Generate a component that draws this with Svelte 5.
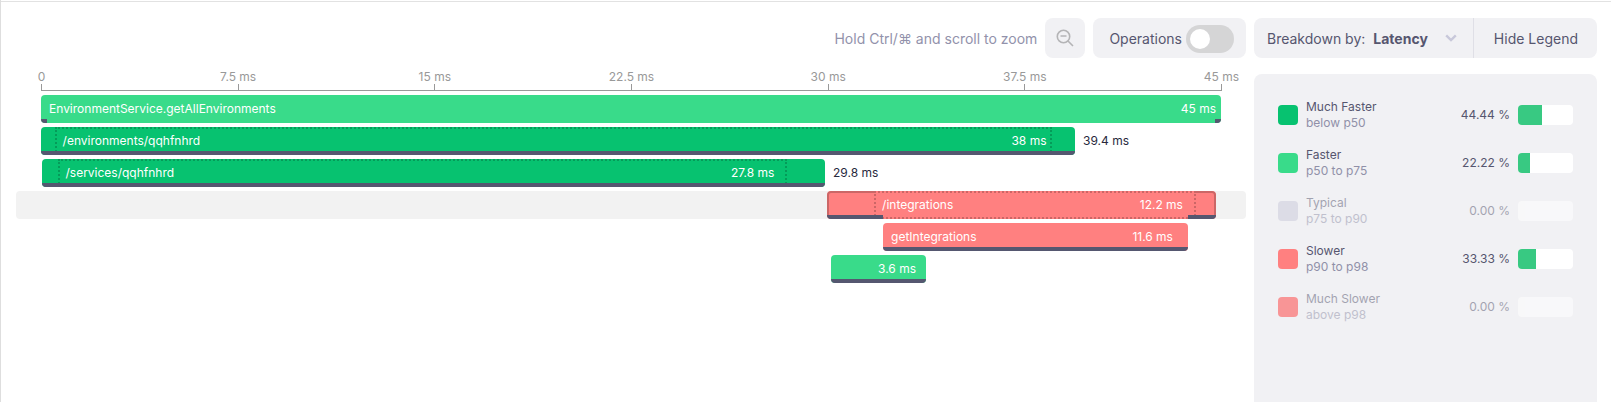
<script>
  const ticks = ['0', '7.5 ms', '15 ms', '22.5 ms', '30 ms', '37.5 ms', '45 ms'];

  // Positions are shares of the whole trace, in percent.
  const spans = [
    { tone: 'faster', start: 0, end: 100, name: 'EnvironmentService.getAllEnvironments', time: '45 ms', pad: 5, self: [[0, 0.5], [99.5, 100]] },
    { tone: 'fastest', start: 0, end: 87.63, client: [1.15, 85.72], name: '/environments/qqhfnhrd', time: '38 ms', total: '39.4 ms', self: [[0, 87.63]], pad: 6 },
    { tone: 'fastest', start: 0.08, end: 66.44, client: [1.4, 63.25], name: '/services/qqhfnhrd', time: '27.8 ms', total: '29.8 ms', self: [[0.08, 66.44]], pad: 13 },
    { tone: 'slower', start: 66.61, end: 99.57, client: [70.6, 97.88], name: '/integrations', time: '12.2 ms', self: [[66.61, 71.36], [97.2, 99.57]], active: true, pad: 13 },
    { tone: 'slower', start: 71.36, end: 97.2, name: 'getIntegrations', time: '11.6 ms', self: [[71.36, 97.2]], pad: 15 },
    { tone: 'faster', start: 66.95, end: 75, name: '', time: '3.6 ms', self: [[66.95, 75]], pad: 10 }
  ];

  const legend = [
    { tone: 'fastest', name: 'Much Faster', range: 'below p50', share: 44.44 },
    { tone: 'faster', name: 'Faster', range: 'p50 to p75', share: 22.22 },
    { tone: 'typical', name: 'Typical', range: 'p75 to p90', share: 0 },
    { tone: 'slower', name: 'Slower', range: 'p90 to p98', share: 33.33 },
    { tone: 'slowest', name: 'Much Slower', range: 'above p98', share: 0 }
  ];

  let operations = $state(false);

  const inside = (s, from, to) =>
    `left:${((from - s.start) / (s.end - s.start)) * 100}%;width:${((to - from) / (s.end - s.start)) * 100}%`;
</script>

<div class="page">
  <main>
    <div class="toolbar">
      <span class="hint">Hold Ctrl/⌘ and scroll to zoom</span>
      <button class="zoom" aria-label="Zoom out">
        <svg width="18" height="18" viewBox="0 0 18 18" fill="none" stroke="#b4b4b6" stroke-width="1.6">
          <circle cx="7.5" cy="7.5" r="6.2" />
          <path d="M4.5 7h6M12 12l5 5" />
        </svg>
      </button>
      <label class="operations">
        Operations
        <input type="checkbox" bind:checked={operations} />
      </label>
    </div>

    <div class="axis">
      {#each ticks as tick}
        <span class="tick"><span class="tick-label">{tick}</span></span>
      {/each}
    </div>

    <div class="rows">
      {#each spans as s}
        <div class="row" class:active={s.active}>
          <div class="track">
            <div class="bar {s.tone}" style="margin-left:{s.start}%;width:{s.end - s.start}%">
              {#if s.client}
                <div class="client" style={inside(s, s.client[0], s.client[1])}></div>
              {/if}
              {#each s.self as part}
                <div class="self" style={inside(s, part[0], part[1])}></div>
              {/each}
              <div class="text" style={s.client ? inside(s, s.client[0], s.client[1]) : 'left:0;width:100%'}>
                <span class="name">{s.name}</span>
                <span style="padding-right:{s.pad}px">{s.time}</span>
              </div>
            </div>
            {#if s.total}<span class="total">{s.total}</span>{/if}
          </div>
        </div>
      {/each}
    </div>
  </main>

  <aside>
    <div class="controls">
      <label for="breakdown">Breakdown by:</label>
      <div class="pick">
        <select id="breakdown">
          <option>Latency</option>
        </select>
        <svg width="12" height="8" viewBox="0 0 12 8" fill="none" stroke="#c8c8da" stroke-width="2.4">
          <path d="M1.2 1.3 6 6 10.8 1.3" />
        </svg>
      </div>
      <button class="hide">Hide Legend</button>
    </div>

    <div class="legend">
      {#each legend as item}
        <div class="item" class:empty={item.share === 0}>
          <span class="swatch {item.tone}"></span>
          <span class="desc">{item.name}<small>{item.range}</small></span>
          <span>{item.share.toFixed(2)} %</span>
          <span class="meter"><span class="fill" style="width:{item.share}%"></span></span>
        </div>
      {/each}
    </div>
  </aside>
</div>

<style>
  :global(body) {
    background: #fff;
  }
  .page,
  .page * {
    box-sizing: border-box;
  }
  .page {
    display: flex;
    gap: 8px;
    min-height: 100vh;
    padding: 18px 14px 0 15px;
    border-left: 1px solid #dedede;
    position: relative;
    font: 12px/16px Inter, sans-serif;
    color: #56566f;
  }
  .page::before {
    content: '';
    position: absolute;
    top: 1px;
    left: 0;
    right: 0;
    height: 1px;
    background: #e2e2e2;
  }
  button,
  select {
    border: 0;
    padding: 0;
    background: none;
    color: inherit;
    font: inherit;
  }
  main {
    flex: 1;
    min-width: 0;
  }
  .toolbar {
    display: flex;
    justify-content: flex-end;
    align-items: center;
    gap: 8px;
    height: 40px;
    font-size: 14px;
    line-height: 18px;
  }
  .hint {
    padding-top: 1px;
    color: #9292ab;
  }
  .zoom,
  .operations {
    height: 40px;
    border-radius: 8px;
    background: #f1f1f4;
  }
  .zoom {
    display: grid;
    place-items: center;
    width: 40px;
  }
  .operations {
    display: flex;
    align-items: center;
    gap: 4px;
    padding: 1px 12px 0 16px;
  }
  input {
    appearance: none;
    display: flex;
    width: 48px;
    height: 28px;
    margin: 0;
    padding: 4px;
    border-radius: 14px;
    background: #d5d5d6;
  }
  input::before {
    content: '';
    width: 20px;
    height: 20px;
    border-radius: 50%;
    background: #fff;
  }
  input:checked {
    justify-content: flex-end;
    background: #07c270;
  }
  .axis {
    display: flex;
    justify-content: space-between;
    align-items: flex-end;
    height: 33px;
    margin: 0 24px 0 25px;
    border-bottom: 1px solid #999;
    color: #999;
  }
  .tick {
    display: flex;
    flex-direction: column;
    align-items: center;
    width: 1px;
  }
  .tick::after {
    content: '';
    width: 1px;
    height: 6px;
    background: #999;
  }
  .tick-label {
    white-space: nowrap;
    line-height: 14px;
  }
  .rows {
    display: grid;
    gap: 4px;
    padding-top: 4px;
  }
  .row {
    padding: 0 25px;
    border-radius: 4px;
  }
  .row.active {
    background: #f2f2f2;
  }
  .track {
    display: flex;
    align-items: center;
    gap: 8px;
  }
  .bar {
    position: relative;
    flex: none;
    height: 28px;
    border-radius: 4px;
    overflow: hidden;
    color: #fff;
  }
  .active .bar::before {
    content: '';
    position: absolute;
    inset: 0;
    border: 2px solid #cb6767;
    border-radius: 4px;
  }
  .fastest {
    background: #07c270;
  }
  .faster {
    background: #39db8a;
  }
  .typical {
    background: #c8c8da;
  }
  .slower {
    background: #ff8080;
  }
  .slowest {
    background: #ff3b3b;
  }
  .client {
    position: absolute;
    top: 0;
    bottom: 0;
    border: 2px dotted rgba(0, 0, 0, 0.2);
    background: inherit;
  }
  .self {
    position: absolute;
    bottom: 0;
    height: 4px;
    background: #555770;
  }
  .text {
    position: absolute;
    top: 0;
    display: flex;
    justify-content: space-between;
    align-items: center;
    height: 28px;
    white-space: nowrap;
  }
  .name {
    padding-left: 8px;
  }
  .total {
    color: #28293d;
    white-space: nowrap;
  }
  aside {
    display: flex;
    flex-direction: column;
    gap: 16px;
    width: 343px;
  }
  .controls {
    display: flex;
    align-items: center;
    height: 40px;
    border-radius: 8px;
    background: #f1f1f4;
    padding-left: 13px;
    font-size: 14px;
    line-height: 18px;
    white-space: nowrap;
  }
  .controls label,
  .hide,
  select {
    padding-top: 1px;
  }
  .pick {
    position: relative;
    flex: 1;
    display: flex;
    align-items: center;
    height: 40px;
    padding-left: 8px;
    border-right: 1px solid #dfdfe6;
  }
  select {
    appearance: none;
    width: 100%;
    height: 40px;
    font-weight: 700;
  }
  .pick svg {
    position: absolute;
    right: 16px;
    pointer-events: none;
  }
  .hide {
    height: 40px;
    padding-left: 20px;
    padding-right: 19px;
  }
  .legend {
    flex: 1;
    display: flex;
    flex-direction: column;
    gap: 16px;
    padding: 25px 24px 24px;
    border-radius: 8px 8px 0 0;
    background: #f1f1f4;
  }
  .item {
    display: flex;
    align-items: center;
    gap: 8px;
  }
  .empty {
    opacity: 0.5;
  }
  .swatch {
    width: 20px;
    height: 20px;
    border-radius: 4px;
  }
  .desc {
    flex: 1;
  }
  small {
    display: block;
    font-size: 12px;
    color: #9090a8;
  }
  .meter {
    width: 55px;
    height: 20px;
    border-radius: 4px;
    overflow: hidden;
    background: #fff;
  }
  .fill {
    display: block;
    height: 20px;
    background: #38c982;
  }
</style>
